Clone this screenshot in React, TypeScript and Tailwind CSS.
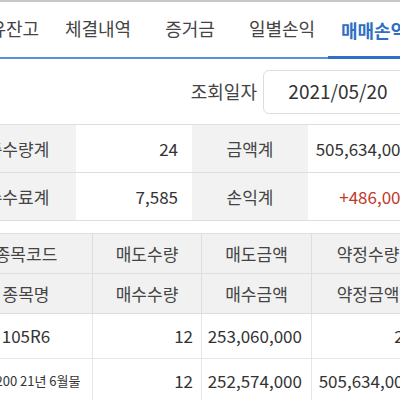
import React from 'react';

const tabs = ['보유잔고', '체결내역', '증거금', '일별손익', '매매손익'];

const summary = [
  { label: '총수량계', value: '24', label2: '금액계', value2: '505,634,000', red: false },
  { label: '수수료계', value: '7,585', label2: '손익계', value2: '+486,000', red: true },
];

export default function App() {
  const active = 4;
  return (
    <div className="w-[400px] h-[400px] overflow-hidden bg-white text-[#333]" style={{ fontFamily: '"Noto Sans CJK KR", "Noto Sans", sans-serif' }}>
      <div className="w-[464px] -ml-[40px]">
        {/* tabs */}
        <div className="h-[2px] bg-[#c8c8c8]" />
        <div className="flex h-[57px] border-b-2 border-[#5b8fd6]">
          {tabs.map((t, i) => (
            <div
              key={t}
              className={`w-[92px] shrink-0 flex items-center justify-center text-[18px] ${i === active ? 'text-[#2f6fc4] font-semibold border-b-[3px] border-[#2f6fc4] -mb-[2px] pt-[2px]' : 'text-[#444] pb-[2px]'}`}
            >
              {t}
            </div>
          ))}
        </div>

        {/* date */}
        <div className="flex items-center justify-end h-[65px] pr-[11px]">
          <span className="text-[18px] text-[#444] mr-[6px]">조회일자</span>
          <div className="w-[150px] h-[44px] rounded-[6px] border border-[#dcdcdc] flex items-center justify-center text-[19px] text-[#333]">
            2021/05/20
          </div>
        </div>

        {/* summary */}
        <div className="border-t border-[#dedede]">
          {summary.map((r) => (
            <div key={r.label} className="grid grid-cols-[116px_116px_116px_116px] h-[48px] border-b border-[#dedede] text-[17px]">
              <div className="bg-[#f2f2f2] flex items-center justify-center text-[#444]">{r.label}</div>
              <div className="flex items-center justify-end pr-[14px]">{r.value}</div>
              <div className="bg-[#f2f2f2] flex items-center justify-center text-[#444]">{r.label2}</div>
              <div className={`flex items-center justify-end pr-[14px] ${r.red ? 'text-[#c0392b]' : ''}`}>{r.value2}</div>
            </div>
          ))}
        </div>

        {/* detail table */}
        <div className="mt-[12px] border-t border-[#dedede] text-[17px]">
          <div className="grid grid-cols-[133px_109px_110px_112px] h-[40px] bg-[#f1f1f1] border-b border-[#dedede] text-[#444]">
            <div className="flex items-center justify-center border-r border-[#dedede]">종목코드</div>
            <div className="flex items-center justify-center border-r border-[#dedede]">매도수량</div>
            <div className="flex items-center justify-center border-r border-[#dedede]">매도금액</div>
            <div className="flex items-center justify-center">약정수량</div>
          </div>
          <div className="grid grid-cols-[133px_109px_110px_112px] h-[40px] bg-[#f1f1f1] border-b border-[#dedede] text-[#444]">
            <div className="flex items-center justify-center border-r border-[#dedede]">종목명</div>
            <div className="flex items-center justify-center border-r border-[#dedede]">매수수량</div>
            <div className="flex items-center justify-center border-r border-[#dedede]">매수금액</div>
            <div className="flex items-center justify-center">약정금액</div>
          </div>
          <div className="grid grid-cols-[133px_109px_110px_112px] h-[45px] border-b border-[#e6e6e6]">
            <div className="flex items-center justify-center border-r border-[#e6e6e6]">105R6</div>
            <div className="flex items-center justify-end pr-[8px] border-r border-[#e6e6e6]">12</div>
            <div className="flex items-center justify-end pr-[9px] border-r border-[#e6e6e6]">253,060,000</div>
            <div className="flex items-center justify-end pr-[11px]">24</div>
          </div>
          <div className="grid grid-cols-[133px_109px_110px_112px] h-[45px] border-b border-[#e6e6e6]">
            <div className="flex items-center justify-center border-r border-[#e6e6e6] text-[13px] whitespace-nowrap">미니200 21년 6월물</div>
            <div className="flex items-center justify-end pr-[8px] border-r border-[#e6e6e6]">12</div>
            <div className="flex items-center justify-end pr-[9px] border-r border-[#e6e6e6]">252,574,000</div>
            <div className="flex items-center justify-end pr-[11px]">505,634,000</div>
          </div>
        </div>
      </div>
    </div>
  );
}
